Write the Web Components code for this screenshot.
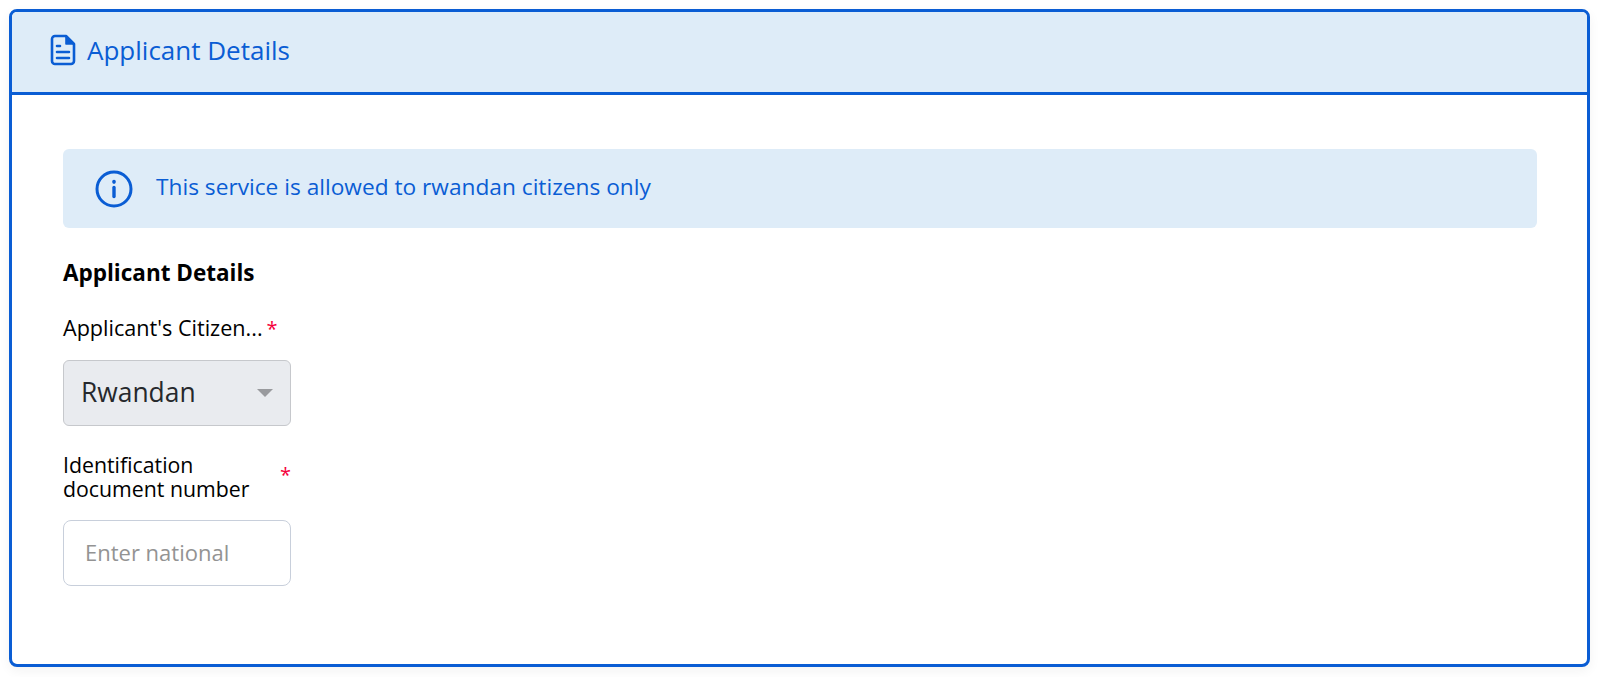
<!DOCTYPE html>
<html lang="en">
<head>
<meta charset="utf-8">
<title>Applicant Details</title>
<style>
    html, body { margin: 0; padding: 0; background: #fff; }
    body { font-family: "Open Sans", "Noto Sans", sans-serif; }
</style>
</head>
<body>
<app-page>
    <form-card heading="Applicant Details">
        <info-alert>This service is allowed to rwandan citizens only</info-alert>
        <h-section>Applicant Details</h-section>
        <select-field label="Applicant's Citizen..." value="Rwandan"></select-field>
        <text-field label="Identification document number" placeholder="Enter national"></text-field>
    </form-card>
</app-page>

<script>
class AppPage extends HTMLElement {
    constructor() {
        super();
        this.attachShadow({ mode: 'open' });
        this.shadowRoot.innerHTML = `
            <style>
                :host { display: block; padding: 9px 10px 10px 9px; height: 677px; box-sizing: border-box; }
            </style>
            <slot></slot>
        `;
    }
}

class FormCard extends HTMLElement {
    constructor() {
        super();
        this.attachShadow({ mode: 'open' });
        this.shadowRoot.innerHTML = `
            <style>
                :host {
                    display: block;
                    height: 658px;
                    box-sizing: border-box;
                    border: 3px solid #0a5dd4;
                    border-radius: 8px;
                    box-shadow: 0 4px 12px rgba(0, 0, 0, 0.05);
                    overflow: hidden;
                    background: #fff;
                }
                .head {
                    display: flex;
                    align-items: center;
                    gap: 11px;
                    height: 83px;
                    padding-left: 38px;
                    padding-bottom: 4px;
                    box-sizing: border-box;
                    background: #deecf8;
                    border-bottom: 3px solid #0a5dd4;
                    color: #0a5dd4;
                    font-size: 26px;
                }
                .body { padding: 54px 50px 0 51px; }
                svg { display: block; }
            </style>
            <div class="head">
                <svg width="26" height="32" viewBox="0 0 26 32" fill="none" stroke="currentColor" stroke-width="2.6" stroke-linejoin="round" stroke-linecap="round">
                    <path d="M5 2h11l8 8v17a3 3 0 0 1-3 3H5a3 3 0 0 1-3-3V5a3 3 0 0 1 3-3z"/>
                    <path d="M16 2v8h8z" fill="currentColor" stroke-width="1.6"/>
                    <path d="M7 12h3M7 18h12M7 24h12"/>
                </svg>
                <span id="title"></span>
            </div>
            <div class="body"><slot></slot></div>
        `;
        this.shadowRoot.getElementById('title').textContent = this.getAttribute('heading');
    }
}

class InfoAlert extends HTMLElement {
    constructor() {
        super();
        this.attachShadow({ mode: 'open' });
        this.shadowRoot.innerHTML = `
            <style>
                :host {
                    display: flex;
                    align-items: center;
                    gap: 23px;
                    height: 79px;
                    padding-left: 32px;
                    box-sizing: border-box;
                    background: #deecf8;
                    border-radius: 6px;
                    color: #0a5dd4;
                    font-size: 22.7px;
                }
                span { padding-bottom: 5px; }
            </style>
            <svg width="38" height="38" viewBox="0 0 38 38" fill="none" stroke="currentColor" stroke-width="3">
                <circle cx="19" cy="19" r="17"/>
                <path d="M19 17.5v9" stroke-width="3.4" stroke-linecap="round"/>
                <path d="M19 11.5v.6" stroke-width="3.6" stroke-linecap="round"/>
            </svg>
            <span><slot></slot></span>
        `;
    }
}

class HSection extends HTMLElement {
    constructor() {
        super();
        this.attachShadow({ mode: 'open' });
        this.shadowRoot.innerHTML = `
            <style>
                :host {
                    display: block;
                    margin-top: 31px;
                    font-size: 22.5px;
                    line-height: 28px;
                    font-weight: 700;
                    color: #000;
                }
            </style>
            <slot></slot>
        `;
    }
}

class SelectField extends HTMLElement {
    constructor() {
        super();
        this.attachShadow({ mode: 'open' });
        this.shadowRoot.innerHTML = `
            <style>
                :host { display: block; width: 228px; margin-top: 29px; }
                .label { font-size: 21.6px; line-height: 24px; color: #000; white-space: nowrap; }
                .label b { font-weight: 400; color: #f5003c; font-size: 20px; line-height: 16px; margin-left: 4px; }
                .box {
                    display: flex;
                    align-items: center;
                    justify-content: space-between;
                    height: 66px;
                    margin-top: 20px;
                    padding: 0 17px 2px 17px;
                    box-sizing: border-box;
                    background: #e9ebef;
                    border: 1.5px solid #c6c8cc;
                    border-radius: 6px;
                    font-size: 26.4px;
                    color: #26282c;
                }
                .caret {
                    width: 0;
                    height: 0;
                    margin-top: 2px;
                    border-left: 8px solid transparent;
                    border-right: 8px solid transparent;
                    border-top: 8px solid #999a9e;
                }
            </style>
            <div class="label"><span id="lb"></span><b>*</b></div>
            <div class="box"><span id="val"></span><i class="caret"></i></div>
        `;
        this.shadowRoot.getElementById('lb').textContent = this.getAttribute('label');
        this.shadowRoot.getElementById('val').textContent = this.getAttribute('value');
    }
}

class TextField extends HTMLElement {
    constructor() {
        super();
        this.attachShadow({ mode: 'open' });
        this.shadowRoot.innerHTML = `
            <style>
                :host { display: block; width: 228px; margin-top: 27px; }
                .label { display: flex; justify-content: space-between; font-size: 21.3px; line-height: 24px; color: #000; }
                .label span { width: 200px; }
                .label b { font-weight: 400; color: #f5003c; font-size: 20px; margin-top: 10px; }
                input {
                    display: block;
                    width: 100%;
                    height: 66px;
                    margin-top: 19px;
                    padding: 0 21px 3px;
                    box-sizing: border-box;
                    background: #fff;
                    border: 1.5px solid #c8cfdb;
                    border-radius: 8px;
                    font: inherit;
                    font-size: 22px;
                }
                input::placeholder { color: #939393; opacity: 1; }
            </style>
            <div class="label"><span id="lb"></span><b>*</b></div>
            <input type="text">
        `;
        this.shadowRoot.getElementById('lb').textContent = this.getAttribute('label');
        this.shadowRoot.querySelector('input').placeholder = this.getAttribute('placeholder');
    }
}

customElements.define('app-page', AppPage);
customElements.define('form-card', FormCard);
customElements.define('info-alert', InfoAlert);
customElements.define('h-section', HSection);
customElements.define('select-field', SelectField);
customElements.define('text-field', TextField);
</script>
</body>
</html>
